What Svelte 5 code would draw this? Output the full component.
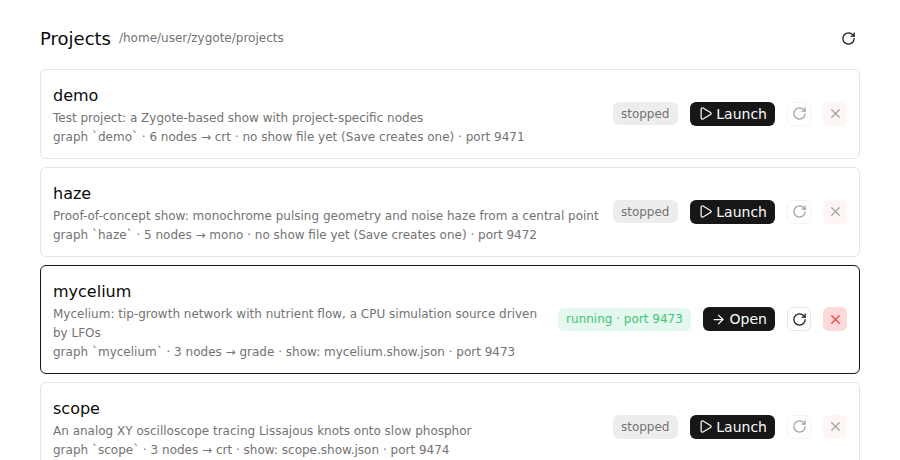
<script>
	const projects = [
		{
			name: 'demo',
			desc: 'Test project: a Zygote-based show with project-specific nodes',
			meta: 'graph `demo` · 6 nodes → crt · no show file yet (Save creates one) · port 9471'
		},
		{
			name: 'haze',
			desc: 'Proof-of-concept show: monochrome pulsing geometry and noise haze from a central point',
			meta: 'graph `haze` · 5 nodes → mono · no show file yet (Save creates one) · port 9472'
		},
		{
			name: 'mycelium',
			desc: 'Mycelium: tip-growth network with nutrient flow, a CPU simulation source driven by LFOs',
			meta: 'graph `mycelium` · 3 nodes → grade · show: mycelium.show.json · port 9473',
			port: 9473
		},
		{
			name: 'scope',
			desc: 'An analog XY oscilloscope tracing Lissajous knots onto slow phosphor',
			meta: 'graph `scope` · 3 nodes → crt · show: scope.show.json · port 9474'
		}
	];
</script>

{#snippet reload()}
	<svg viewBox="0 0 24 24" fill="none" stroke="currentColor" stroke-width="2" stroke-linecap="round" stroke-linejoin="round">
		<path d="M21 12a9 9 0 1 1-9-9c2.52 0 4.93 1 6.74 2.74L21 8" />
		<path d="M21 3v5h-5" />
	</svg>
{/snippet}

<main class="page">
	<header class="head">
		<h1>Projects</h1>
		<span class="path">/home/user/zygote/projects</span>
		<button class="refresh" aria-label="Refresh">{@render reload()}</button>
	</header>

	<div class="list">
		{#each projects as p}
			<article class="card" class:active={p.port}>
				<div class="info">
					<h2>{p.name}</h2>
					<p>{p.desc}</p>
					<p>{p.meta}</p>
				</div>
				<div class="actions">
					{#if p.port}
						<span class="badge running">running · port {p.port}</span>
						<button class="primary">
							<svg viewBox="0 0 24 24" fill="none" stroke="currentColor" stroke-width="2" stroke-linecap="round" stroke-linejoin="round">
								<path d="M5 12h14" />
								<path d="m12 5 7 7-7 7" />
							</svg>
							Open
						</button>
					{:else}
						<span class="badge">stopped</span>
						<button class="primary">
							<svg viewBox="0 0 24 24" fill="none" stroke="currentColor" stroke-width="2" stroke-linecap="round" stroke-linejoin="round">
								<path d="M5 5a2 2 0 0 1 3.008-1.728l11.997 6.998a2 2 0 0 1 .003 3.458l-12 7A2 2 0 0 1 5 19z" />
							</svg>
							Launch
						</button>
					{/if}
					<button class="icon" disabled={!p.port} aria-label="Restart">{@render reload()}</button>
					<button class="icon stop" disabled={!p.port} aria-label="Stop">
						<svg viewBox="0 0 24 24" fill="none" stroke="currentColor" stroke-width="2" stroke-linecap="round" stroke-linejoin="round">
							<path d="M18 6 6 18" />
							<path d="m6 6 12 12" />
						</svg>
					</button>
				</div>
			</article>
		{/each}
	</div>
</main>

<style>
	:global(body) {
		background: #fff;
		font-family: 'DejaVu Sans', sans-serif;
		line-height: 1.6;
		color: #171717;
		overflow: hidden;
	}

	.page {
		padding: 24px 40px;
	}

	.head {
		display: flex;
		align-items: center;
		gap: 8px;
		margin-bottom: 16px;
	}

	h1 {
		margin: 1px 0 -1px;
		font-size: 18px;
		font-weight: 400;
		color: #0a0a0a;
	}

	.path {
		font-size: 12px;
		color: #737373;
	}

	.refresh {
		margin-left: auto;
		width: 24px;
		height: 24px;
		padding: 0;
		border: 0;
		background: none;
		color: #171717;
		display: flex;
		align-items: center;
		justify-content: center;
	}

	.refresh svg {
		width: 15px;
		height: 15px;
	}

	.list {
		display: flex;
		flex-direction: column;
		gap: 8px;
	}

	.card {
		display: flex;
		align-items: center;
		gap: 12px;
		padding: 12px;
		border: 1px solid #e5e5e5;
		border-radius: 6px;
	}

	.card.active {
		border-color: #171717;
	}

	.info {
		flex: 1;
		min-width: 0;
		padding-top: 1px;
		margin-bottom: -1.4px;
	}

	h2 {
		margin: 0 0 0.4px;
		font-size: 16px;
		font-weight: 400;
		color: #0a0a0a;
	}

	.info p {
		margin: 0;
		font-size: 12px;
		color: #737373;
	}

	.actions {
		display: flex;
		align-items: center;
		gap: 12px;
		flex-shrink: 0;
	}

	.badge {
		padding: 2.6px 8px 1.6px;
		border-radius: 6px;
		background: #ededed;
		color: #737373;
		font-size: 12px;
	}

	.badge.running {
		background: #e5f8ee;
		color: #3cc776;
	}

	button {
		font-family: inherit;
	}

	.primary {
		display: flex;
		align-items: center;
		gap: 3.8px;
		height: 24px;
		padding: 0 8px;
		border: 0;
		border-radius: 6px;
		background: #171717;
		color: #fafafa;
		font-size: 14px;
	}

	.primary svg {
		width: 15px;
		height: 15px;
	}

	.icon {
		width: 24px;
		height: 24px;
		padding: 0;
		border: 1px solid #e5e5e5;
		border-radius: 6px;
		background: #fff;
		color: #171717;
		display: flex;
		align-items: center;
		justify-content: center;
	}

	.icon svg {
		width: 15px;
		height: 15px;
	}

	.icon:disabled {
		opacity: 0.4;
	}

	.icon.stop {
		border-color: transparent;
		background: #fdd9d9;
		color: #ef4444;
	}

	.icon.stop:disabled {
		background: #fdf6f4;
		color: #a3a3a3;
		opacity: 1;
	}
</style>
